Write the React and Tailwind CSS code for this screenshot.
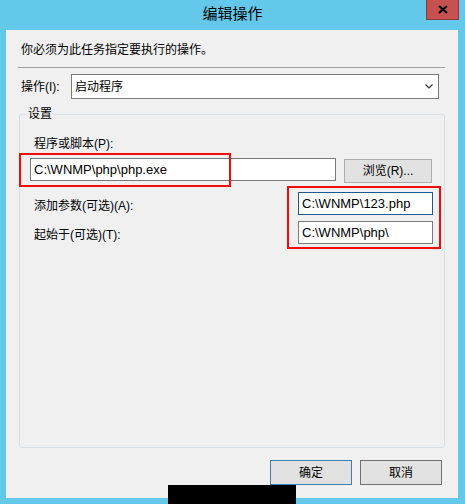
import React from 'react';

const font = { fontFamily: '"Liberation Sans", "Noto Sans CJK SC", sans-serif' };

function TextBox({ value, className = '' }) {
  return (
    <div className={`h-[23px] bg-white border flex items-center pl-[3px] text-[13px] text-black ${className}`}>
      {value}
    </div>
  );
}

function Button({ children, primary }) {
  return (
    <div
      className={`w-[82px] h-[25px] bg-[#e1e1e1] border flex items-center justify-center text-[12px] text-black ${
        primary ? 'border-[#3c7fb1]' : 'border-[#707070]'
      }`}
    >
      {children}
    </div>
  );
}

export default function App() {
  return (
    <div className="relative w-[465px] h-[504px] bg-[#63c8ea] flex flex-col overflow-hidden" style={font}>
      {/* Title bar */}
      <div className="relative h-[30px] flex items-center justify-center">
        <span className="text-[15px] text-black -mt-[2px]">编辑操作</span>
        <div className="absolute left-[426px] top-0 w-[33px] h-[20px] bg-[#c75050] border-l border-b border-r border-[#8a3a3a] flex items-center justify-center">
          <svg width="10" height="9" viewBox="0 0 10 9">
            <path d="M1 1 L9 8 M9 1 L1 8" stroke="#000" strokeWidth="2.2" />
          </svg>
        </div>
      </div>

      {/* Client area */}
      <div className="relative mx-[6px] w-[452px] h-[468px] bg-[#f0f0f0] flex flex-col">
        <p className="pt-[12px] pl-[15px] text-[12px] leading-[16px] text-black">你必须为此任务指定要执行的操作。</p>
        <div className="mt-[9px] ml-[12px] w-[427px] h-px bg-[#a0a0a0]" />

        {/* Action select */}
        <div className="mt-[6px] flex items-center h-[25px]">
          <span className="w-[65px] pl-[15px] text-[12px] text-black">操作(I):</span>
          <div className="w-[368px] h-[25px] bg-white border border-[#7a7a7a] flex items-center justify-between pl-[3px] pr-[5px] text-[12px] text-black">
            <span>启动程序</span>
            <svg width="8" height="5" viewBox="0 0 8 5">
              <path d="M0.5 0.5 L4 4 L7.5 0.5" stroke="#333" strokeWidth="1.2" fill="none" />
            </svg>
          </div>
        </div>

        {/* Settings group */}
        <div className="relative mt-[15px] ml-[13px] w-[426px] h-[334px] border border-[#d5dfe5] rounded-[3px] pl-[10px] flex flex-col">
          <span className="absolute -top-[9px] left-[6px] px-[2px] bg-[#f0f0f0] text-[12px] leading-[16px] text-black">设置</span>
          <span className="mt-[21px] ml-[4px] text-[12px] leading-[16px] text-black">程序或脚本(P):</span>
          <div className="mt-[6px] flex items-start">
            <TextBox value="C:\WNMP\php\php.exe" className="w-[306px] border-[#7a7a7a]" />
            <div className="ml-[8px] mt-[1px] w-[88px] h-[24px] bg-[#e1e1e1] border border-[#adadad] flex items-center justify-center text-[12px] text-black">
              浏览(R)...
            </div>
          </div>
          <div className="mt-[9px] flex items-center">
            <span className="w-[264px] ml-[4px] mt-[4px] text-[12px] text-black">添加参数(可选)(A):</span>
            <TextBox value="C:\WNMP\123.php" className="w-[135px] border-[#1e5a8c]" />
          </div>
          <div className="mt-[6px] flex items-center">
            <span className="w-[264px] ml-[4px] mt-[4px] text-[12px] text-black">起始于(可选)(T):</span>
            <TextBox value="C:\WNMP\php\" className="w-[135px] border-[#7a7a7a]" />
          </div>
        </div>

        {/* Buttons */}
        <div className="mt-[12px] pr-[16px] flex justify-end gap-[8px]">
          <Button primary>确定</Button>
          <Button>取消</Button>
        </div>

        {/* Annotation boxes */}
        <div className="absolute left-[13px] top-[123px] w-[212px] h-[34px] border-2 border-[#f20c0c]" />
        <div className="absolute left-[281px] top-[156px] w-[154px] h-[63px] border-2 border-[#f20c0c]" />
      </div>

      {/* Redaction bar */}
      <div className="absolute left-[168px] top-[485px] w-[128px] h-[19px] bg-black" />
    </div>
  );
}
